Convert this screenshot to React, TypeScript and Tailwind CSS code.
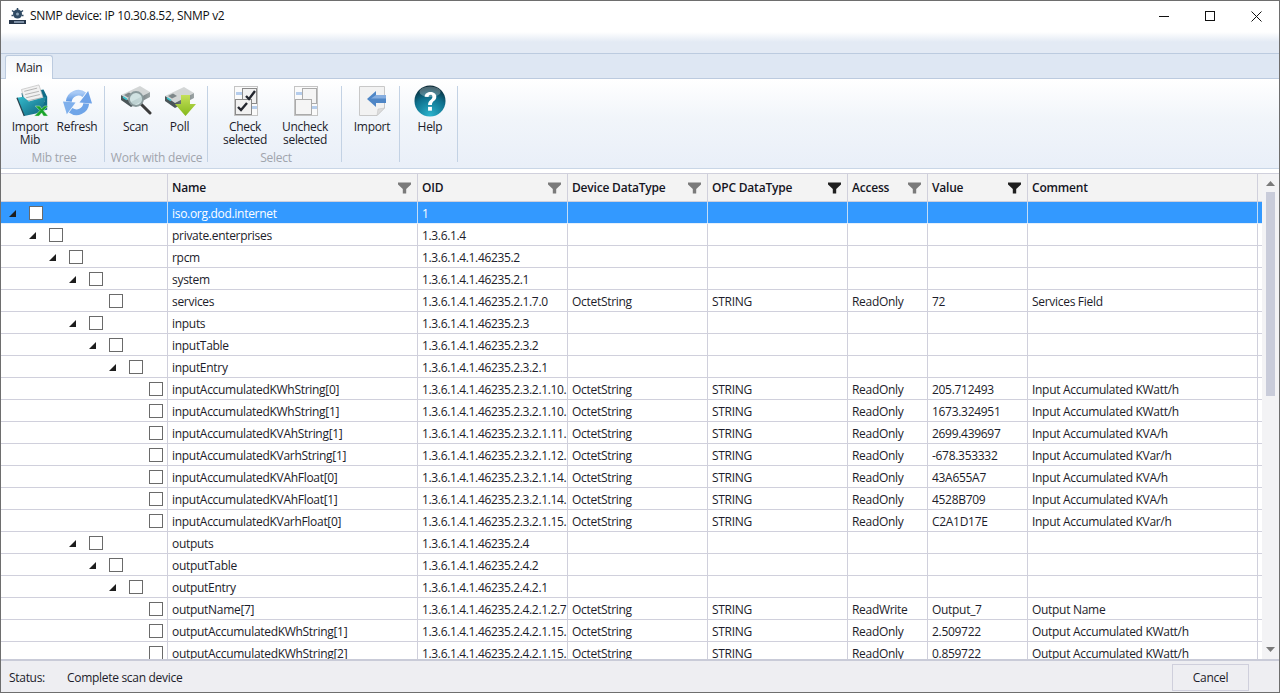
import React from "react";

type Row = { l: number; tri?: boolean; n: string; o: string; d?: string; t?: string; a?: string; v?: string; c?: string; sel?: boolean };

const S = "OctetString";
const ST = "STRING";
const RO = "ReadOnly";
const rows: Row[] = [
  { l: 0, tri: true, n: "iso.org.dod.internet", o: "1", sel: true },
  { l: 1, tri: true, n: "private.enterprises", o: "1.3.6.1.4" },
  { l: 2, tri: true, n: "rpcm", o: "1.3.6.1.4.1.46235.2" },
  { l: 3, tri: true, n: "system", o: "1.3.6.1.4.1.46235.2.1" },
  { l: 4, n: "services", o: "1.3.6.1.4.1.46235.2.1.7.0", d: S, t: ST, a: RO, v: "72", c: "Services Field" },
  { l: 3, tri: true, n: "inputs", o: "1.3.6.1.4.1.46235.2.3" },
  { l: 4, tri: true, n: "inputTable", o: "1.3.6.1.4.1.46235.2.3.2" },
  { l: 5, tri: true, n: "inputEntry", o: "1.3.6.1.4.1.46235.2.3.2.1" },
  { l: 6, n: "inputAccumulatedKWhString[0]", o: "1.3.6.1.4.1.46235.2.3.2.1.10.", d: S, t: ST, a: RO, v: "205.712493", c: "Input Accumulated KWatt/h" },
  { l: 6, n: "inputAccumulatedKWhString[1]", o: "1.3.6.1.4.1.46235.2.3.2.1.10.", d: S, t: ST, a: RO, v: "1673.324951", c: "Input Accumulated KWatt/h" },
  { l: 6, n: "inputAccumulatedKVAhString[1]", o: "1.3.6.1.4.1.46235.2.3.2.1.11.", d: S, t: ST, a: RO, v: "2699.439697", c: "Input Accumulated KVA/h" },
  { l: 6, n: "inputAccumulatedKVarhString[1]", o: "1.3.6.1.4.1.46235.2.3.2.1.12.", d: S, t: ST, a: RO, v: "-678.353332", c: "Input Accumulated KVar/h" },
  { l: 6, n: "inputAccumulatedKVAhFloat[0]", o: "1.3.6.1.4.1.46235.2.3.2.1.14.", d: S, t: ST, a: RO, v: "43A655A7", c: "Input Accumulated KVA/h" },
  { l: 6, n: "inputAccumulatedKVAhFloat[1]", o: "1.3.6.1.4.1.46235.2.3.2.1.14.", d: S, t: ST, a: RO, v: "4528B709", c: "Input Accumulated KVA/h" },
  { l: 6, n: "inputAccumulatedKVarhFloat[0]", o: "1.3.6.1.4.1.46235.2.3.2.1.15.", d: S, t: ST, a: RO, v: "C2A1D17E", c: "Input Accumulated KVar/h" },
  { l: 3, tri: true, n: "outputs", o: "1.3.6.1.4.1.46235.2.4" },
  { l: 4, tri: true, n: "outputTable", o: "1.3.6.1.4.1.46235.2.4.2" },
  { l: 5, tri: true, n: "outputEntry", o: "1.3.6.1.4.1.46235.2.4.2.1" },
  { l: 6, n: "outputName[7]", o: "1.3.6.1.4.1.46235.2.4.2.1.2.7", d: S, t: ST, a: "ReadWrite", v: "Output_7", c: "Output Name" },
  { l: 6, n: "outputAccumulatedKWhString[1]", o: "1.3.6.1.4.1.46235.2.4.2.1.15.", d: S, t: ST, a: RO, v: "2.509722", c: "Output Accumulated KWatt/h" },
  { l: 6, n: "outputAccumulatedKWhString[2]", o: "1.3.6.1.4.1.46235.2.4.2.1.15.", d: S, t: ST, a: RO, v: "0.859722", c: "Output Accumulated KWatt/h" },
];

const cols = "grid grid-cols-[167px_250px_150px_140px_140px_80px_100px_230px_4px]";

function Funnel({ dark }: { dark?: boolean }) {
  return (
    <svg width="13" height="12" viewBox="0 0 13 12" className="shrink-0">
      <path d="M0 0.5H13V2.500L8.200 7V11.500H4.800V7L0 2.500Z" fill={dark ? "#1f1f1f" : "#7a7a7a"} />
    </svg>
  );
}

function Header({ label, filter, dark }: { label?: string; filter?: boolean; dark?: boolean }) {
  return (
    <div className="flex items-center justify-between pl-[4px] pr-[6px] border-r border-[#d0d0dc] font-semibold tracking-[-0.2px] text-[#15151f] overflow-hidden">
      <span>{label}</span>
      {filter && <Funnel dark={dark} />}
    </div>
  );
}

function Cell({ v, sel, tight }: { v?: string; sel?: boolean; tight?: boolean }) {
  return (
    <div className={`pl-[4px] pt-[3px] border-r overflow-hidden whitespace-nowrap flex items-center ${tight ? "tracking-[-0.35px]" : ""} ${sel ? "border-[#c4ddf7]" : "border-[#d0d0dc]"}`}>
      {v}
    </div>
  );
}

function Bar({ row }: { row: Row }) {
  const sel = row.sel;
  const indent = 8 + row.l * 20;
  return (
    <div className={`${cols} h-[22px] shrink-0 border-b ${sel ? "bg-[#3399ff] text-white border-[#e4effb]" : "border-[#d0d0dc] text-[#1c1c2a]"}`}>
      <div className={`flex items-center pt-[1px] border-r ${sel ? "border-[#c4ddf7]" : "border-[#d0d0dc]"}`} style={{ paddingLeft: indent }}>
        <span className="w-[7px] h-[7px] shrink-0 mt-[1px]">
          {row.tri && (
            <svg width="7" height="7" viewBox="0 0 7 7" className="block">
              <path d="M7 0V7H0Z" fill="#1d1d1d" />
            </svg>
          )}
        </span>
        <span className="ml-[13px] w-[14px] h-[14px] shrink-0 border border-[#6a6a6a] bg-white" />
      </div>
      <Cell v={row.n} sel={sel} />
      <Cell v={row.o} sel={sel} tight />
      <Cell v={row.d} sel={sel} />
      <Cell v={row.t} sel={sel} />
      <Cell v={row.a} sel={sel} />
      <Cell v={row.v} sel={sel} />
      <Cell v={row.c} sel={sel} />
      <div />
    </div>
  );
}

function ImportMibIcon() {
  return (
    <svg width="33" height="33" viewBox="0 0 36 36" className="mb-[1px] ml-[4px] overflow-visible">
      <defs>
        <linearGradient id="folder" x1="0" y1="0" x2="1" y2="1">
          <stop offset="0" stopColor="#35bccd" />
          <stop offset="1" stopColor="#0d5d78" />
        </linearGradient>
      </defs>
      <path d="M6 10L30 6L34 14V28L10 33Z" fill="#0f6d88" />
      <path d="M6 6L25 1L31 19L11 25Z" fill="#f1f1f1" stroke="#b9b9b9" strokeWidth="0.7" />
      <path d="M9 8L23 4.500M10 11.500L25 8M11 15L26 11.500M12 18.500L28 15" stroke="#a9a9a9" strokeWidth="0.9" />
      <path d="M1 15L8 14L14 19L33 14L27 31L9 35Z" fill="url(#folder)" />
      <path d="M1 15L9 35" stroke="#28404c" strokeWidth="1.300" />
      <path d="M21 24H26L28 27L31 24H35L30 29L35 35H30L28 31.500L25 35H20L26 29Z" fill="#17a32a" stroke="#e4f6dc" strokeWidth="0.5" />
    </svg>
  );
}

function RefreshIcon() {
  return (
    <svg width="31" height="31" viewBox="0 0 32 32">
      <defs>
        <linearGradient id="ref" x1="0" y1="0" x2="0" y2="1">
          <stop offset="0" stopColor="#a9caf5" />
          <stop offset="1" stopColor="#5c97e2" />
        </linearGradient>
      </defs>
      <path d="M7 15A10 10 0 0 1 23 8" fill="none" stroke="url(#ref)" strokeWidth="6" />
      <path d="M18 16L31 17L27 4Z" fill="#6fa3e8" />
      <path d="M25 17A10 10 0 0 1 9 24" fill="none" stroke="#6ea4e8" strokeWidth="6" />
      <path d="M14 16L1 15L5 28Z" fill="#7fb0ec" />
    </svg>
  );
}

function Device({ id }: { id: string }) {
  return (
    <>
      <defs>
        <linearGradient id={id} x1="0" y1="0" x2="1" y2="0">
          <stop offset="0" stopColor="#4f5a5e" />
          <stop offset="1" stopColor="#9da5a6" />
        </linearGradient>
      </defs>
      <path d="M1 10L20 1L30 7L11 17Z" fill="#d3d6d6" />
      <path d="M1 10L11 17V22L1 15Z" fill="#4a5558" />
      <path d="M11 17L30 7V12L11 22Z" fill={`url(#${id})`} />
      <path d="M4 10L9 7.500L13 10L8 12.500Z" fill="#7e8789" />
      <path d="M3 12L7 14.500" stroke="#39c6cf" strokeWidth="1.500" />
    </>
  );
}

function ScanIcon() {
  return (
    <svg width="32" height="30" viewBox="0 0 32 30" className="mb-[3px]">
      <Device id="d1" />
      <path d="M21 19L30 28" stroke="#3b3b3b" strokeWidth="3" strokeLinecap="round" />
      <circle cx="16" cy="14" r="7" fill="#cfe4e4" fillOpacity="0.85" stroke="#8a9a9c" strokeWidth="1.800" />
    </svg>
  );
}

function PollIcon() {
  return (
    <svg width="32" height="30" viewBox="0 0 32 30" className="mb-[2px]">
      <Device id="d2" />
      <defs>
        <linearGradient id="grn" x1="0" y1="0" x2="0" y2="1">
          <stop offset="0" stopColor="#c4e05a" />
          <stop offset="1" stopColor="#84b81c" />
        </linearGradient>
      </defs>
      <path d="M17 9H26V18H32L21.500 30L11 18H17Z" fill="url(#grn)" />
    </svg>
  );
}

function CheckIcon({ on }: { on?: boolean }) {
  const line = on ? "#8a8a8a" : "#ababab";
  const fill = on ? "#f1f1f1" : "#f5f5f5";
  return (
    <svg width="24" height="30" viewBox="0 0 24 30" className="mb-[2px] ml-[2px]">
      <rect x="0.500" y="0.500" width="23" height="29" fill="#fafafa" stroke="#c4c4c4" />
      <rect x="2" y="6" width="7" height="3" fill="#b5cdec" />
      <rect x="17" y="20" width="6" height="3" fill="#b5cdec" />
      <rect x="8.500" y="2.500" width="14" height="15" fill={fill} stroke={line} />
      <rect x="1.500" y="13.500" width="16" height="15" fill={fill} stroke={line} />
      {on && <path d="M12 10L15 13L21 5" fill="none" stroke="#23262e" strokeWidth="2.400" />}
      {on && <path d="M4 21L7 24L13 17" fill="none" stroke="#23262e" strokeWidth="2.400" />}
    </svg>
  );
}

function ImportIcon() {
  return (
    <svg width="27" height="30" viewBox="0 0 27 30" className="mb-[2px]">
      <path d="M0.500 0.500H25.500V22L18 29.500H0.500Z" fill="#f2f2f2" stroke="#c8c8c8" />
      <path d="M25.500 22L18 29.500L19 23Z" fill="#dcdcdc" stroke="#c0c0c0" strokeWidth="0.5" />
      <path d="M8 13L17 5V9H27V17H17V21Z" fill="#4f86c6" />
      <path d="M17 9H27V12.500H12Z" fill="#86aee0" />
    </svg>
  );
}

function HelpIcon() {
  return (
    <svg width="32" height="32" viewBox="0 0 33 33" className="mb-[1px]">
      <defs>
        <radialGradient id="hlp" cx="0.5" cy="0.95" r="0.95">
          <stop offset="0" stopColor="#2ab3cd" />
          <stop offset="0.6" stopColor="#0e6f8c" />
          <stop offset="1" stopColor="#06222e" />
        </radialGradient>
      </defs>
      <circle cx="16.500" cy="16.500" r="16" fill="url(#hlp)" />
      <ellipse cx="16.500" cy="7" rx="11" ry="5.500" fill="#ffffff" fillOpacity="0.28" />
      <path d="M11 12C11 5.500 23 5.500 23 12C23 16.500 18.500 16 18.500 20.500H14.500C14.500 15 19 15.500 19 12C19 9.500 15 9.500 15 12.500Z" fill="#ffffff" />
      <rect x="14.500" y="22.500" width="4" height="4" fill="#ffffff" />
    </svg>
  );
}

function Btn({ icon, label, w }: { icon: React.ReactNode; label: string[]; w: string }) {
  return (
    <div className={`flex flex-col items-center ${w}`}>
      <div className="h-[32px] flex items-end justify-center">{icon}</div>
      <div className="mt-[2px] text-center leading-[13px] text-[#1c1c2a] whitespace-nowrap">
        {label.map((x) => (
          <div key={x}>{x}</div>
        ))}
      </div>
    </div>
  );
}

function Group({ w, label, pad, labelPad, children }: { w: string; label?: string; pad: string; labelPad?: string; children: React.ReactNode }) {
  return (
    <div className={`${w} h-[76px] shrink-0 border-r border-[#c3d2e4] flex flex-col justify-between`}>
      <div className={`flex justify-center ${pad}`}>{children}</div>
      <div className={`text-center leading-[14px] -mb-[3px] text-[#a0a4ac] whitespace-nowrap tracking-[-0.25px] ${labelPad ?? ""}`}>{label}</div>
    </div>
  );
}

export default function App() {
  return (
    <div className="w-[1280px] h-[693px] flex flex-col overflow-hidden border border-[#6e6e6e] bg-white text-[12px] font-['Open_Sans','Liberation_Sans',sans-serif] tracking-[-0.3px]">
      {/* title bar */}
      <div className="h-[53px] shrink-0 bg-[linear-gradient(#ffffff_0,#ffffff_31px,#e3eaf4_41px,#e3eaf4_100%)] border-b border-[#bccbdf] flex items-start">
        <div className="flex items-center h-[30px] pl-[8px]">
          <svg width="17" height="17" viewBox="0 0 17 17">
            <circle cx="8.500" cy="6" r="4.500" fill="#2f4a63" />
            <circle cx="8.500" cy="6" r="1.500" fill="#8ea6ba" />
            <path d="M8.500 0V2M3 2.500L5 4M14 2.500L12 4M2.500 7.500H4.500M12.500 7.500H14.500" stroke="#2f4a63" strokeWidth="1.500" />
            <rect x="0" y="12" width="17" height="4" fill="#26364a" />
            <rect x="5" y="13" width="10" height="2" fill="#7e90a6" />
          </svg>
          <span className="ml-[4px] text-[#111] tracking-[-0.32px]">SNMP device: IP 10.30.8.52, SNMP v2</span>
        </div>
        <div className="ml-auto flex items-center h-[30px]">
          <div className="w-[46px] flex justify-center">
            <svg width="10" height="10" viewBox="0 0 10 10"><path d="M0 5.500H10" stroke="#111" /></svg>
          </div>
          <div className="w-[46px] flex justify-center">
            <svg width="10" height="10" viewBox="0 0 10 10"><rect x="0.500" y="0.500" width="9" height="9" fill="none" stroke="#111" /></svg>
          </div>
          <div className="w-[46px] flex justify-center">
            <svg width="11" height="11" viewBox="0 0 11 11"><path d="M0.500 0.500L10.500 10.500M10.500 0.500L0.500 10.500" stroke="#111" /></svg>
          </div>
        </div>
      </div>
      {/* tab strip */}
      <div className="h-[25px] shrink-0 bg-[#dee7f3] border-b border-[#bccbdf] pl-[4px] flex items-end">
        <div className="h-[24px] -mb-[1px] w-[48px] bg-[linear-gradient(#f3f7fb,#ffffff)] border border-b-0 border-[#bccbdf] rounded-t-[3px] flex items-center justify-center text-[#1c1c2a]">
          Main
        </div>
      </div>
      {/* ribbon */}
      <div className="h-[90px] shrink-0 bg-[linear-gradient(#ffffff,#f1f5fa_45%,#e9eff8)] border-b border-[#c9d6e6] flex items-start pt-[7px] pl-[3px]">
        <Group w="w-[101px]" pad="pr-[2px]" label="Mib tree">
          <Btn w="w-[48px]" icon={<ImportMibIcon />} label={["Import", "Mib"]} />
          <Btn w="w-[46px]" icon={<RefreshIcon />} label={["Refresh"]} />
        </Group>
        <Group w="w-[103px]" pad="pl-[3px]" labelPad="pl-[1px]" label="Work with device">
          <Btn w="w-[44px]" icon={<ScanIcon />} label={["Scan"]} />
          <Btn w="w-[44px]" icon={<PollIcon />} label={["Poll"]} />
        </Group>
        <Group w="w-[134px]" pad="pl-[1px]" labelPad="pl-[3px]" label="Select">
          <Btn w="w-[60px]" icon={<CheckIcon on />} label={["Check", "selected"]} />
          <Btn w="w-[60px]" icon={<CheckIcon />} label={["Uncheck", "selected"]} />
        </Group>
        <Group w="w-[58px]" pad="pl-[3px]">
          <Btn w="w-[50px]" icon={<ImportIcon />} label={["Import"]} />
        </Group>
        <Group w="w-[58px]" pad="pl-[3px]">
          <Btn w="w-[50px]" icon={<HelpIcon />} label={["Help"]} />
        </Group>
      </div>
      <div className="h-[4px] shrink-0 bg-white" />
      {/* grid + scrollbar */}
      <div className="flex-1 min-h-0 flex">
        <div className="w-[1261px] shrink-0 flex flex-col overflow-hidden border-t border-[#d0d0dc]">
          <div className={`${cols} h-[28px] shrink-0 bg-[#f3f3f3] border-b border-[#d0d0dc]`}>
            <Header />
            <Header label="Name" filter />
            <Header label="OID" filter />
            <Header label="Device DataType" filter />
            <Header label="OPC DataType" filter dark />
            <Header label="Access" filter />
            <Header label="Value" filter dark />
            <Header label="Comment" />
            <div />
          </div>
          {rows.map((r) => (
            <Bar key={r.n} row={r} />
          ))}
        </div>
        <div className="w-[17px] shrink-0 bg-[#f3f3f5] flex flex-col items-center pt-[7px] border-t border-[#d0d0dc]">
          <svg width="9" height="5" viewBox="0 0 9 5"><path d="M0 5L4.500 0L9 5Z" fill="#7a7a7a" /></svg>
          <div className="w-[9px] h-[204px] mt-[6px] bg-[#c9ccda]" />
          <div className="flex-1" />
          <svg width="9" height="5" viewBox="0 0 9 5" className="mb-[7px]"><path d="M0 0L4.500 5L9 0Z" fill="#7a7a7a" /></svg>
        </div>
      </div>
      {/* status */}
      <div className="h-[33px] shrink-0 bg-[#eeeef2] border-t-2 border-[#c9cbd8] flex items-center text-[#1c1c2a]">
        <span className="ml-[8px] w-[58px] pt-[2px]">Status:</span>
        <span className="pt-[2px]">Complete scan device</span>
        <div className="ml-auto mr-[30px] mt-[2px] w-[77px] h-[27px] border border-[#cfcfdc] flex items-center justify-center">Cancel</div>
      </div>
    </div>
  );
}
